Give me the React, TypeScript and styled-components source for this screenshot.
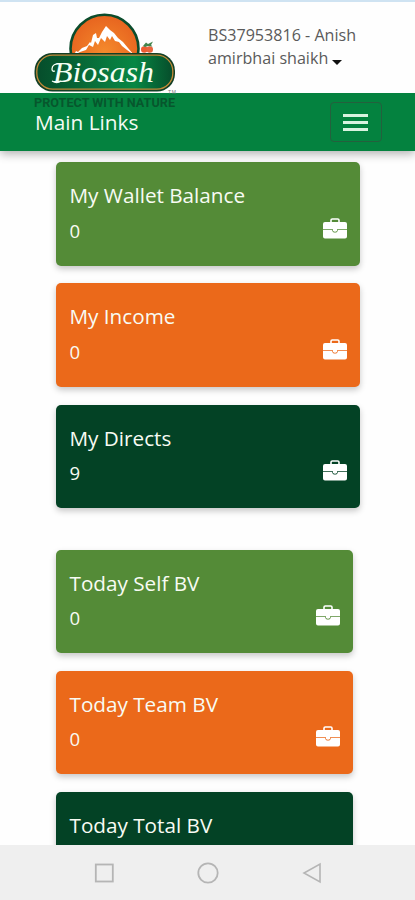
import React from "react";
import styled, { createGlobalStyle } from "styled-components";

const GlobalStyle = createGlobalStyle`
  * { box-sizing: border-box; }
  html, body { margin: 0; background: #fefefe; }
  body { font-family: "Open Sans", "Noto Sans", sans-serif; overflow: hidden; }
`;

const Screen = styled.div`
  width: 415px;
  height: 900px;
  display: flex;
  flex-direction: column;
  overflow: hidden;
  background: #fefefe;
`;

const StatusStrip = styled.div`
  flex: none;
  height: 2px;
  background: #cfe3f2;
`;

const Header = styled.header`
  flex: none;
  position: relative;
  z-index: 2;
  height: 91px;
  padding: 0 0 0 208px;
  background: #fefefe;
`;

const Logo = styled.svg`
  position: absolute;
  left: 30px;
  top: 6px;
`;

const Account = styled.div`
  padding-top: 22px;
  font-size: 16.1px;
  line-height: 23px;
  color: #5a5a5a;
  white-space: nowrap;
`;

const Caret = styled.span`
  display: inline-block;
  margin-left: 4px;
  vertical-align: -1px;
  border: 5px solid transparent;
  border-top-color: #111;
  border-bottom: 0;
`;

const NavBar = styled.nav`
  flex: none;
  position: relative;
  z-index: 1;
  height: 58px;
  padding: 0 33.500px 0 35px;
  display: flex;
  align-items: center;
  justify-content: space-between;
  background: #04823f;
  color: #f4fbf4;
  font-size: 20.8px;
  line-height: 28px;
  box-shadow: 0 3px 9px rgba(0, 0, 0, 0.3);
`;

const MenuButton = styled.button`
  width: 52px;
  height: 40px;
  padding: 0;
  display: flex;
  flex-direction: column;
  align-items: center;
  justify-content: center;
  gap: 4px;
  border: 1.5px solid #24603d;
  border-radius: 4px;
  background: transparent;
`;

const MenuLine = styled.span`
  width: 25px;
  height: 3px;
  background: #d9f3df;
`;

const Content = styled.main`
  flex: 1;
  min-height: 0;
  overflow: hidden;
  padding: 11.4px 55px 0 56px;
`;

const CardGroup = styled.section<{ $inset?: boolean }>`
  display: flex;
  flex-direction: column;
  gap: 17.5px;
  padding-right: ${(p) => (p.$inset ? "7px" : "0")};
  margin-bottom: 41.5px;
`;

const Card = styled.article<{ $color: string }>`
  height: 103.6px;
  padding: 18px 13px 0 13.5px;
  border-radius: 5px;
  background: ${(p) => p.$color};
  color: #f8fbf3;
  box-shadow: 0 3px 6px rgba(0, 0, 0, 0.22);
`;

const CardTitle = styled.h2`
  margin: 0;
  font-size: 20.7px;
  font-weight: 400;
  line-height: 30px;
  white-space: nowrap;
`;

const CardFooter = styled.div`
  display: flex;
  justify-content: space-between;
  margin-top: 5.300px;
  font-size: 18.6px;
  line-height: 30px;
`;

const BriefcaseIcon = styled.svg`
  display: block;
  margin-top: 2px;
`;

const SystemBar = styled.footer`
  flex: none;
  position: relative;
  z-index: 3;
  height: 55px;
  padding: 1px 93px 0 94px;
  display: flex;
  align-items: center;
  justify-content: space-between;
  background: #efefef;
`;

const Briefcase = () => (
  <BriefcaseIcon width="24" height="21" viewBox="0 0 24 21">
    <path d="M8 4.500V2.300Q8 1 9.300 1H14.700Q16 1 16 2.300V4.500" fill="none" stroke="#fff" strokeWidth="1.600" />
    <path d="M2 4H22Q24 4 24 6V11.200H0V6Q0 4 2 4Z" fill="#fff" />
    <path d="M0 11.900H9.200Q9.500 14.600 12 14.600Q14.500 14.600 14.800 11.900H24V18.500Q24 20.500 22 20.500H2Q0 20.500 0 18.500Z" fill="#fff" />
    <path d="M10 11H14V12.200Q13.800 13.800 12 13.800Q10.200 13.800 10 12.200Z" fill="#fff" />
  </BriefcaseIcon>
);

const BrandLogo = () => (
  <Logo width="150" height="104" viewBox="30 8 150 104">
    <defs>
      <radialGradient id="sun" cx="50%" cy="55%" r="55%">
        <stop offset="0" stopColor="#f58a2c" />
        <stop offset="1" stopColor="#e7641f" />
      </radialGradient>
      <linearGradient id="badge" x1="0" x2="1">
        <stop offset="0" stopColor="#064d2b" />
        <stop offset="0.55" stopColor="#087a3f" />
        <stop offset="0.72" stopColor="#078744" />
        <stop offset="1" stopColor="#064d2b" />
      </linearGradient>
    </defs>
    <circle cx="104.500" cy="48.800" r="34" fill="url(#sun)" stroke="#0b4c2c" strokeWidth="2.600" />
    <path
      d="M74 55L76 51L78 52L82 48L87 46L90 42L91 43L93 35L96 33L97 38L99 38L102 32L106 26L110 30L114 33L118 38L123 42L128 48L134 55L127 50L122 46L119 42L115 41L112 36L110 40L107 36L105 42L101 38L98 45L95 41L93 47L89 45L86 50L80 52Z"
      fill="#fff"
    />
    <circle cx="144.300" cy="49.500" r="3.300" fill="#ef5b32" />
    <circle cx="149.700" cy="49.500" r="3.300" fill="#e9643d" />
    <path d="M143 46L146 42.500L148 44L153 41.500L151 45L152.500 46.500L148 46L145 47Z" fill="#43844c" />
    <rect x="34.500" y="53" width="140.500" height="38.500" rx="18" fill="#123f25" />
    <rect x="36.800" y="55.200" width="136" height="34" rx="16" fill="url(#badge)" stroke="#c18a38" strokeWidth="1.300" />
    <text
      x="53"
      y="82"
      fill="#f5fff4"
      fontFamily="Liberation Serif, serif"
      fontSize="29.500"
      fontStyle="italic"
      fontWeight="400"
      textLength="101"
      lengthAdjust="spacingAndGlyphs"
    >
      Biosash
    </text>
    <path d="M61 64Q52 63 52 69Q52 72 55 71M52 81Q57 84 61 81" fill="none" stroke="#f5fff4" strokeWidth="1.300" />
    <text x="168" y="93.500" fill="#777" fontFamily="Liberation Sans, sans-serif" fontSize="5" textLength="8">TM</text>
    <text
      x="34"
      y="107"
      fill="#07562d"
      fontFamily="Roboto, Liberation Sans, sans-serif"
      fontSize="12.500"
      fontWeight="700"
      textLength="141"
      lengthAdjust="spacingAndGlyphs"
    >
      PROTECT WITH NATURE
    </text>
  </Logo>
);

type CardData = { title: string; value: string; color: string };

const GREEN = "#548b37";
const ORANGE = "#eb691a";
const DARK = "#034225";

const accountCards: CardData[] = [
  { title: "My Wallet Balance", value: "0", color: GREEN },
  { title: "My Income", value: "0", color: ORANGE },
  { title: "My Directs", value: "9", color: DARK },
];

const todayCards: CardData[] = [
  { title: "Today Self BV", value: "0", color: GREEN },
  { title: "Today Team BV", value: "0", color: ORANGE },
  { title: "Today Total BV", value: "", color: DARK },
];

const SummaryCard = ({ title, value, color }: CardData) => (
  <Card $color={color}>
    <CardTitle>{title}</CardTitle>
    <CardFooter>
      <span>{value}</span>
      <Briefcase />
    </CardFooter>
  </Card>
);

export default function App() {
  return (
    <Screen>
      <GlobalStyle />
      <StatusStrip />
      <Header>
        <BrandLogo />
        <Account>
          BS37953816 - Anish
          <br />
          amirbhai shaikh
          <Caret />
        </Account>
      </Header>
      <NavBar>
        <span>Main Links</span>
        <MenuButton aria-label="Menu">
          <MenuLine />
          <MenuLine />
          <MenuLine />
        </MenuButton>
      </NavBar>
      <Content>
        <CardGroup>
          {accountCards.map((c) => (
            <SummaryCard key={c.title} {...c} />
          ))}
        </CardGroup>
        <CardGroup $inset>
          {todayCards.map((c) => (
            <SummaryCard key={c.title} {...c} />
          ))}
        </CardGroup>
      </Content>
      <SystemBar>
        <svg width="20" height="20" viewBox="0 0 20 20" fill="none" stroke="#b5b5b5" strokeWidth="1.800">
          <rect x="1.800" y="1.500" width="17" height="17" />
        </svg>
        <svg width="22" height="22" viewBox="0 0 22 22" fill="none" stroke="#b5b5b5" strokeWidth="1.800">
          <circle cx="11" cy="11" r="9.700" />
        </svg>
        <svg width="20" height="22" viewBox="0 0 20 22" fill="none" stroke="#b5b5b5" strokeWidth="1.600">
          <path d="M18 2V20L2 11Z" />
        </svg>
      </SystemBar>
    </Screen>
  );
}
